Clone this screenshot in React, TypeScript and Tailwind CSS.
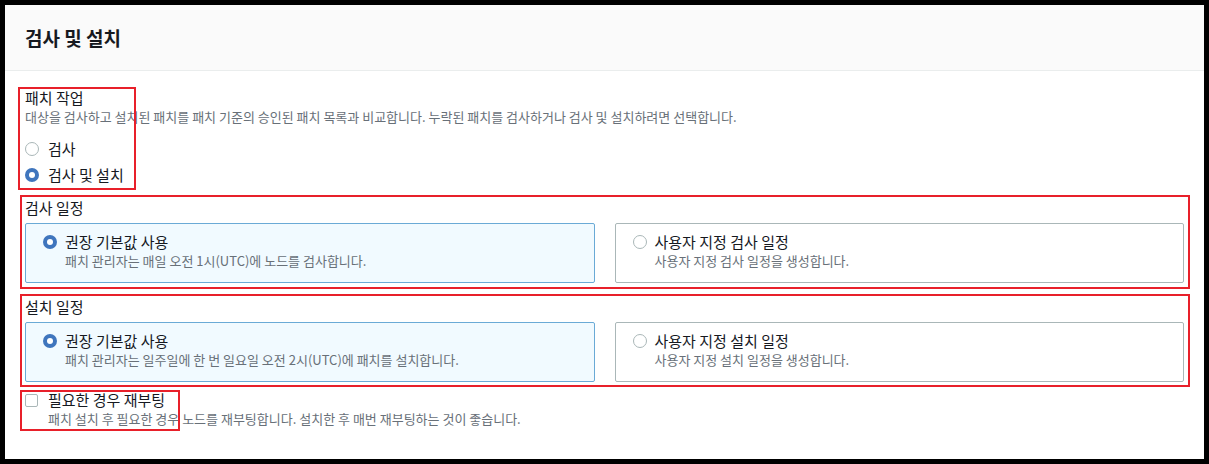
import React from "react";

const font = { fontFamily: '"Noto Sans CJK KR", "Noto Sans", sans-serif' };

function Radio({ checked }: { checked?: boolean }) {
    return checked ? (
        <span className="inline-flex items-center justify-center w-[14px] h-[14px] rounded-full bg-[#3f75bd] shrink-0">
            <span className="w-[6px] h-[6px] rounded-full bg-white" />
        </span>
    ) : (
        <span className="inline-block w-[14px] h-[14px] rounded-full border border-[#aab7b8] bg-white shrink-0" />
    );
}

function Tile({ checked, title, desc }: { checked?: boolean; title: string; desc: string }) {
    return (
        <div
            className={
                checked
                    ? "flex-1 h-[60px] border border-[#6aaad6] bg-[#f1faff] rounded-[2px] pl-[17px] pt-[8px]"
                    : "flex-1 h-[60px] border border-[#aab7b8] bg-white rounded-[2px] pl-[17px] pt-[8px]"
            }
        >
            <div className="flex items-center gap-[8px] h-[20px]">
                <Radio checked={checked} />
                <span className="text-[15px] leading-[20px] text-[#16191f]">{title}</span>
            </div>
            <div className="pl-[22px] text-[13px] leading-[17px] text-[#687078]">{desc}</div>
        </div>
    );
}

function RedBox({ className }: { className: string }) {
    return <div className={"absolute border-2 border-[#e8202a] pointer-events-none " + className} />;
}

export default function App() {
    return (
        <div className="bg-black p-[5px] w-[1209px] h-[464px]" style={font}>
            <div className="relative bg-white w-full h-full">
                <header className="h-[66px] bg-[#fafafa] border-b border-[#eaeded] flex items-center px-[20px]">
                    <h2 className="text-[19px] font-bold text-[#16191f] leading-[24px]">검사 및 설치</h2>
                </header>

                <section className="px-[20px] pt-[17px] flex flex-col">
                    <div className="text-[15px] leading-[20px] text-[#16191f]">패치 작업</div>
                    <div className="text-[13px] leading-[17px] text-[#687078]">
                        대상을 검사하고 설치된 패치를 패치 기준의 승인된 패치 목록과 비교합니다. 누락된 패치를 검사하거나 검사 및 설치하려면 선택합니다.
                    </div>

                    <div className="mt-[14px] flex flex-col gap-[6px]">
                        <div className="flex items-center gap-[9px] h-[20px]">
                            <Radio />
                            <span className="text-[15px] text-[#16191f]">검사</span>
                        </div>
                        <div className="flex items-center gap-[9px] h-[20px]">
                            <Radio checked />
                            <span className="text-[15px] text-[#16191f]">검사 및 설치</span>
                        </div>
                    </div>

                    <div className="mt-[13px] text-[15px] leading-[20px] text-[#16191f]">검사 일정</div>
                    <div className="mt-[5px] flex gap-[20px]">
                        <Tile checked title="권장 기본값 사용" desc="패치 관리자는 매일 오전 1시(UTC)에 노드를 검사합니다." />
                        <Tile title="사용자 지정 검사 일정" desc="사용자 지정 검사 일정을 생성합니다." />
                    </div>

                    <div className="mt-[14px] text-[15px] leading-[20px] text-[#16191f]">설치 일정</div>
                    <div className="mt-[5px] flex gap-[20px]">
                        <Tile checked title="권장 기본값 사용" desc="패치 관리자는 일주일에 한 번 일요일 오전 2시(UTC)에 패치를 설치합니다." />
                        <Tile title="사용자 지정 설치 일정" desc="사용자 지정 설치 일정을 생성합니다." />
                    </div>

                    <div className="mt-[8px] flex items-center gap-[10px] h-[20px]">
                        <span className="w-[13px] h-[13px] border border-[#aab7b8] rounded-[2px] bg-white shrink-0" />
                        <span className="text-[15px] text-[#16191f]">필요한 경우 재부팅</span>
                    </div>
                    <div className="pl-[23px] text-[13px] leading-[17px] text-[#687078]">
                        패치 설치 후 필요한 경우 노드를 재부팅합니다. 설치한 후 매번 재부팅하는 것이 좋습니다.
                    </div>
                </section>

                <RedBox className="left-[13px] top-[82px] w-[118px] h-[103px]" />
                <RedBox className="left-[15px] top-[190px] w-[1170px] h-[94px]" />
                <RedBox className="left-[15px] top-[289px] w-[1170px] h-[93px]" />
                <RedBox className="left-[15px] top-[385px] w-[160px] h-[41px]" />
            </div>
        </div>
    );
}
